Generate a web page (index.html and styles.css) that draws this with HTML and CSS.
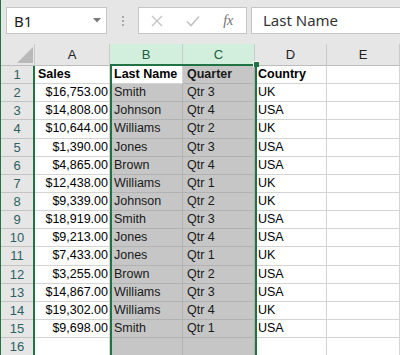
FILE: index.html
```html
<!DOCTYPE html>
<html lang="en">
<head>
  <meta charset="UTF-8" />
  <title>Sheet</title>
  <link rel="stylesheet" href="styles.css">
</head>
<body>
<div class="app">
  <div class="formula-bar">
    <div class="name-box">
      <span>B1</span>
      <svg class="drop" width="8" height="5" viewBox="0 0 8 5"><path d="M0 0h8L4 4.5z" fill="#7a7a7a"/></svg>
    </div>
    <div class="grip"><i></i><i></i><i></i></div>
    <div class="fx-buttons">
      <span class="slot">
        <svg width="12" height="12" viewBox="0 0 12 12"><path d="M1 1l10 10M11 1L1 11" stroke="#c4c4c4" stroke-width="1.4" fill="none"/></svg>
      </span>
      <span class="slot">
        <svg width="14" height="12" viewBox="0 0 14 12"><path d="M1 6.5l4 4L13 1.5" stroke="#c4c4c4" stroke-width="1.6" fill="none"/></svg>
      </span>
      <span class="slot fx">fx</span>
    </div>
    <div class="formula">Last Name</div>
  </div>

  <div class="sheet">
    <div class="col rowhead">
      <div class="hd corner">
        <svg width="16" height="16" viewBox="0 0 16 16"><path d="M16 0v16H0z" fill="#b9b9b9"/></svg>
      </div>
      <div class="rows">
        <div class="cell rn">1</div>
        <div class="cell rn">2</div>
        <div class="cell rn">3</div>
        <div class="cell rn">4</div>
        <div class="cell rn">5</div>
        <div class="cell rn">6</div>
        <div class="cell rn">7</div>
        <div class="cell rn">8</div>
        <div class="cell rn">9</div>
        <div class="cell rn">10</div>
        <div class="cell rn">11</div>
        <div class="cell rn">12</div>
        <div class="cell rn">13</div>
        <div class="cell rn">14</div>
        <div class="cell rn">15</div>
        <div class="cell rn">16</div>
      </div>
    </div>

    <div class="col col-a">
      <div class="hd">A</div>
      <div class="cell bold">Sales</div>
      <div class="cell num">$16,753.00</div>
      <div class="cell num">$14,808.00</div>
      <div class="cell num">$10,644.00</div>
      <div class="cell num">$1,390.00</div>
      <div class="cell num">$4,865.00</div>
      <div class="cell num">$12,438.00</div>
      <div class="cell num">$9,339.00</div>
      <div class="cell num">$18,919.00</div>
      <div class="cell num">$9,213.00</div>
      <div class="cell num">$7,433.00</div>
      <div class="cell num">$3,255.00</div>
      <div class="cell num">$14,867.00</div>
      <div class="cell num">$19,302.00</div>
      <div class="cell num">$9,698.00</div>
      <div class="cell"></div>
    </div>

    <div class="col col-b">
      <div class="hd picked">B</div>
      <div class="cell bold">Last Name</div>
      <div class="cell sel">Smith</div>
      <div class="cell sel">Johnson</div>
      <div class="cell sel">Williams</div>
      <div class="cell sel">Jones</div>
      <div class="cell sel">Brown</div>
      <div class="cell sel">Williams</div>
      <div class="cell sel">Johnson</div>
      <div class="cell sel">Smith</div>
      <div class="cell sel">Jones</div>
      <div class="cell sel">Jones</div>
      <div class="cell sel">Brown</div>
      <div class="cell sel">Williams</div>
      <div class="cell sel">Williams</div>
      <div class="cell sel">Smith</div>
      <div class="cell sel"></div>
    </div>

    <div class="col col-c">
      <div class="hd picked">C</div>
      <div class="cell sel bold">Quarter</div>
      <div class="cell sel">Qtr 3</div>
      <div class="cell sel">Qtr 4</div>
      <div class="cell sel">Qtr 2</div>
      <div class="cell sel">Qtr 3</div>
      <div class="cell sel">Qtr 4</div>
      <div class="cell sel">Qtr 1</div>
      <div class="cell sel">Qtr 2</div>
      <div class="cell sel">Qtr 3</div>
      <div class="cell sel">Qtr 4</div>
      <div class="cell sel">Qtr 1</div>
      <div class="cell sel">Qtr 2</div>
      <div class="cell sel">Qtr 3</div>
      <div class="cell sel">Qtr 4</div>
      <div class="cell sel">Qtr 1</div>
      <div class="cell sel"></div>
    </div>

    <div class="col col-d">
      <div class="hd">D</div>
      <div class="cell bold">Country</div>
      <div class="cell">UK</div>
      <div class="cell">USA</div>
      <div class="cell">UK</div>
      <div class="cell">USA</div>
      <div class="cell">USA</div>
      <div class="cell">UK</div>
      <div class="cell">UK</div>
      <div class="cell">USA</div>
      <div class="cell">USA</div>
      <div class="cell">UK</div>
      <div class="cell">USA</div>
      <div class="cell">USA</div>
      <div class="cell">UK</div>
      <div class="cell">USA</div>
      <div class="cell"></div>
    </div>

    <div class="col col-e">
      <div class="hd">E</div>
      <div class="cell"></div>
      <div class="cell"></div>
      <div class="cell"></div>
      <div class="cell"></div>
      <div class="cell"></div>
      <div class="cell"></div>
      <div class="cell"></div>
      <div class="cell"></div>
      <div class="cell"></div>
      <div class="cell"></div>
      <div class="cell"></div>
      <div class="cell"></div>
      <div class="cell"></div>
      <div class="cell"></div>
      <div class="cell"></div>
      <div class="cell"></div>
    </div>

    <div class="selection"><span class="handle"></span></div>
  </div>
</div>
</body>
</html>
```

FILE: styles.css
```css
body {
  margin: 0;
  background: #fff;
  font-family: "Liberation Sans", Arial, sans-serif;
  color: #000;
}
.app {
  width: 400px;
  height: 355px;
  overflow: hidden;
  box-sizing: border-box;
  border-left: 1px solid #217346;
}

/* formula bar */
.formula-bar {
  height: 44px;
  box-sizing: border-box;
  padding-top: 7px;
  background: #e6e6e6;
  display: flex;
  align-items: flex-start;
}
.name-box {
  margin-left: 5px;
  width: 101px;
  height: 27px;
  box-sizing: border-box;
  padding: 0 5px 0 7px;
  background: #fff;
  border: 1px solid #c6c6c6;
  display: flex;
  align-items: center;
  justify-content: space-between;
  font: 15px "Noto Sans", sans-serif;
  color: #222;
}
.grip {
  margin-left: 15px;
  width: 3px;
  height: 27px;
  display: flex;
  flex-direction: column;
  justify-content: center;
  gap: 2px;
}
.grip i {
  width: 2px;
  height: 2px;
  background: #a8a8a8;
}
.fx-buttons {
  margin-left: 13px;
  width: 109px;
  height: 27px;
  box-sizing: border-box;
  background: #fff;
  border: 1px solid #c6c6c6;
  display: flex;
  align-items: center;
}
.slot {
  width: 36px;
  display: flex;
  justify-content: center;
  align-items: center;
}
.fx {
  font: italic 14px "Liberation Serif", serif;
  color: #707070;
}
.formula {
  margin-left: 4px;
  margin-right: -2px;
  flex: 1;
  height: 27px;
  box-sizing: border-box;
  padding-left: 11px;
  background: #fff;
  border: 1px solid #c6c6c6;
  font: 15px/25px "Noto Sans", sans-serif;
  color: #333;
}

/* grid */
.sheet {
  position: relative;
  display: flex;
}
.col {
  display: flex;
  flex-direction: column;
}
.rowhead { width: 34px; }
.col-a { width: 75px; }
.col-b { width: 73px; }
.col-c { width: 72px; }
.col-d { width: 72px; }
.col-e { width: 73px; }

.hd {
  height: 22px;
  box-sizing: border-box;
  background: #e6e6e6;
  border-right: 1px solid #cacaca;
  border-bottom: 1px solid #bdbdbd;
  display: flex;
  align-items: center;
  justify-content: center;
  font-size: 13px;
  color: #222;
}
.hd.picked {
  background: #d2eedd;
  color: #1e5e3f;
  border-bottom: 2px solid #217346;
}
.corner {
  justify-content: flex-end;
  align-items: flex-end;
  padding: 0 1px 2px 0;
}
.rows {
  border-right: 2px solid #217346;
}

.cell {
  height: 18.15px;
  box-sizing: border-box;
  padding: 0 3px;
  border-right: 1px solid #d4d4d4;
  border-bottom: 1px solid #d4d4d4;
  font-size: 12.5px;
  line-height: 17px;
  white-space: nowrap;
  overflow: hidden;
}
.col-b .cell,
.col-c .cell { padding-left: 4px; }
.cell.rn {
  background: #e6e6e6;
  border-right: none;
  border-bottom-color: #c4c4c4;
  text-align: center;
  font-size: 13px;
  color: #2e5f62;
}
.cell.num {
  text-align: right;
  padding-right: 1px;
}
.cell.bold { font-weight: bold; }
.cell.sel {
  background: #c6c6c6;
  border-color: #b2b2b2;
  color: #1a1a1a;
}

/* selected range outline */
.selection {
  position: absolute;
  left: 109px;
  top: 20px;
  width: 147px;
  height: 300px;
  box-sizing: border-box;
  border: 2px solid #217346;
  pointer-events: none;
}
.handle {
  position: absolute;
  right: -4px;
  top: -5px;
  width: 5px;
  height: 5px;
  background: #217346;
  border: 1px solid #fff;
  border-width: 1px 0 0 1px;
}
```
